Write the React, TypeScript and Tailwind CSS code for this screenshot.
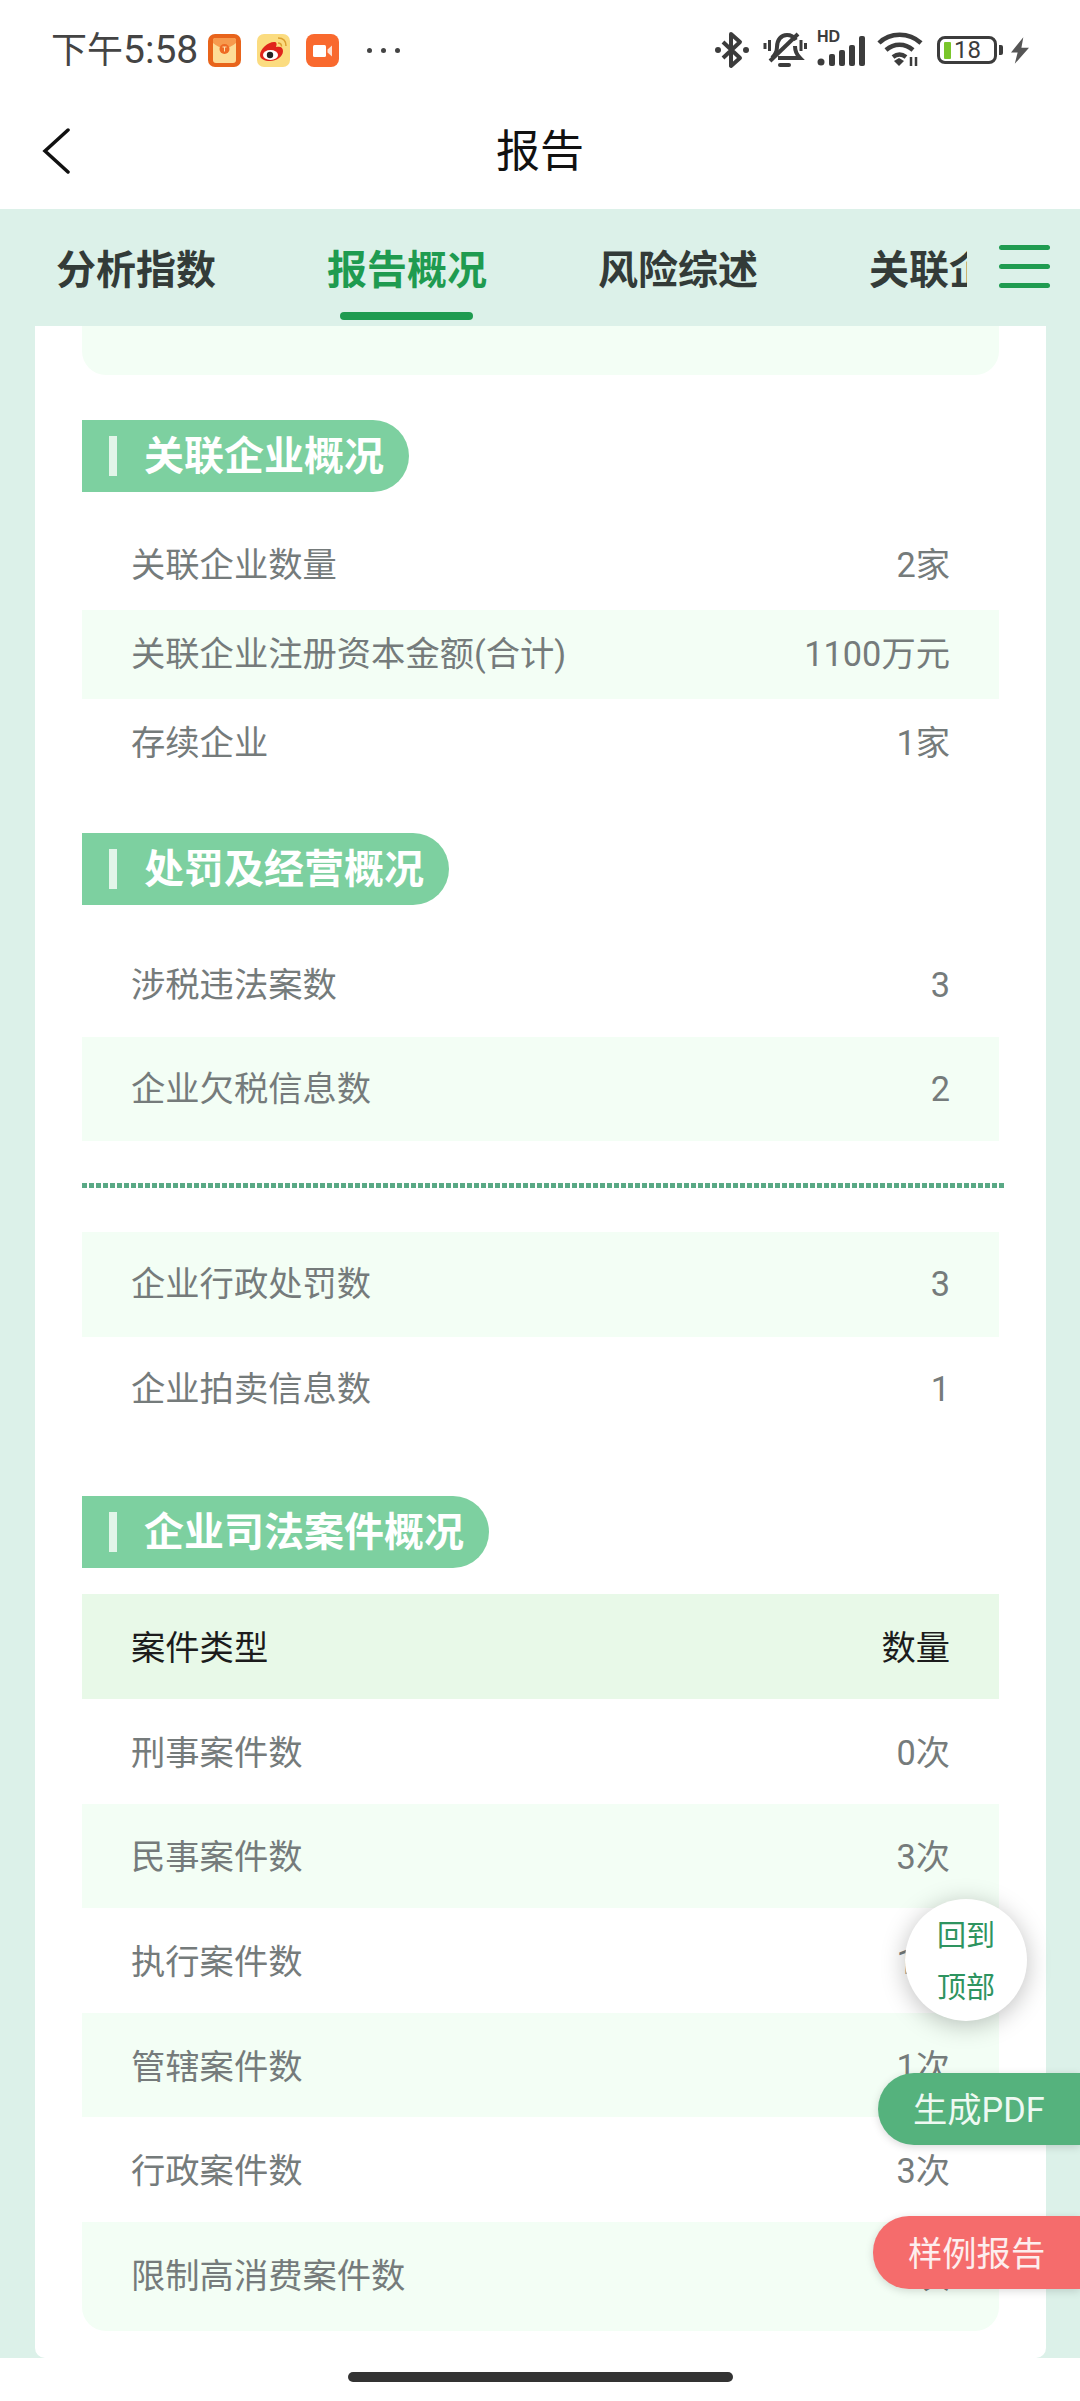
const cjk = { fontFamily: '"Roboto","Noto Sans CJK SC",sans-serif' };

function RedPacket() {
  return (
    <svg width="33" height="33" viewBox="0 0 33 33">
      <rect width="33" height="33" rx="7" fill="#e8641b" />
      <rect x="5" y="4" width="23" height="25" rx="3" fill="#fddc97" />
      <path d="M5 9 Q16.500 19 28 9 L28 6 Q28 4 26 4 L7 4 Q5 4 5 6Z" fill="#f79a4d" />
      <circle cx="16.500" cy="15" r="5" fill="#ee6a24" />
      <path d="M14.500 13h4M16.500 13v4.500" stroke="#fde3ae" strokeWidth="1" />
    </svg>
  );
}

function Weibo() {
  return (
    <svg width="33" height="33" viewBox="0 0 33 33">
      <rect width="33" height="33" rx="7" fill="#fbdc80" />
      <path d="M3 21c0-6 8-13 14-13 3 0 3 2 2 5 4-1 7 0 7 4 0 6-7 10-13 10-5 0-10-2-10-6z" fill="#e0241c" />
      <ellipse cx="13.500" cy="21" rx="7.500" ry="5" fill="#fff" />
      <circle cx="13" cy="21" r="3.200" fill="#222" />
      <path d="M21 4c5 0 8 3 8 8M21 9c2.200 0 3.500 1.500 3.500 3.500" stroke="#dca030" strokeWidth="1.500" fill="none" />
    </svg>
  );
}

function Video() {
  return (
    <svg width="33" height="33" viewBox="0 0 33 33">
      <rect width="33" height="33" rx="8" fill="#f9692e" />
      <rect x="7" y="11" width="13" height="12" rx="1.500" fill="#fff" />
      <path d="M21.500 15.500 26 11.500V22.500L21.500 18.500Z" fill="#fde0d2" />
    </svg>
  );
}

function StatusRight() {
  return (
    <div className="flex items-center">
      <svg width="34" height="38" viewBox="0 0 34 38" fill="none" stroke="#3c3c3c" strokeWidth="4">
        <path d="M8 11 25 27 16 35V3L25 11 8 27" strokeLinejoin="round" />
        <circle cx="3" cy="19" r="3" fill="#3c3c3c" stroke="none" />
        <circle cx="31" cy="19" r="3" fill="#3c3c3c" stroke="none" />
      </svg>
      <svg className="ml-[14px]" width="44" height="38" viewBox="0 0 44 38" fill="none" stroke="#3c3c3c" strokeWidth="4">
        <path d="M9 27c3-3 5-6 5-11 0-7 4-12 10-12 4 0 7 2 9 5" />
        <path d="M15 27H37c-3-3-5-6-5-12" />
        <path d="M7 30 35 3" />
        <path d="M17 34h9" strokeLinecap="round" />
        <path d="M2 12v6M6.500 9v11M38 9v11M42.500 12v6" strokeWidth="3" />
      </svg>
      <div className="relative ml-[10px] w-[48px] h-[38px]">
        <span className="absolute left-0 top-[-2px] text-[16px] leading-[16px] font-bold text-[#3c3c3c]" style={{ fontFamily: '"Liberation Sans",sans-serif' }}>HD</span>
        <svg className="absolute left-0 top-0" width="48" height="38" viewBox="0 0 48 38" fill="#3c3c3c">
          <circle cx="4" cy="31" r="3.500" />
          <rect x="12" y="23" width="6" height="12" rx="2" />
          <rect x="22" y="19" width="6" height="16" rx="2" />
          <rect x="32" y="14" width="6" height="21" rx="2" />
          <rect x="42" y="5" width="6" height="30" rx="2" />
        </svg>
      </div>
      <svg className="ml-[12px]" width="46" height="36" viewBox="0 0 46 36" fill="none" stroke="#3c3c3c" strokeWidth="4.500">
        <path d="M2 11C13 0 32 0 44 11" />
        <path d="M9 18c8-7 19-7 27 0" />
        <path d="M16 25c4-3 9-3 13 0" />
        <path d="M17 29l5 5 5-5-5-3z" fill="#3c3c3c" stroke="none" />
        <path d="M34 25v9M39 25v9" strokeWidth="2.500" />
      </svg>
      <div className="relative ml-[14px] w-[60px] h-[28px] rounded-[8px] border-[3px] border-[#3c3c3c] flex items-center">
        <div className="ml-[4px] w-[7px] h-[17px] rounded-[1px] bg-[#7ac62b]" />
        <span className="ml-[3px] text-[24px] leading-[22px] text-[#3c3c3c]" style={{ fontFamily: '"Roboto",sans-serif' }}>18</span>
      </div>
      <div className="ml-[2px] w-[4px] h-[10px] rounded-r-[2px] bg-[#3c3c3c]" />
      <svg className="ml-[8px]" width="18" height="27" viewBox="0 0 19 28" fill="#555">
        <path d="M13 0 0 16h7L4 28 19 11h-8z" />
      </svg>
    </div>
  );
}

function Heading({ children, w }: { children: React.ReactNode; w: string }) {
  return (
    <div className={`flex items-center h-[72px] rounded-r-[36px] bg-[#7dd0a0] ${w}`}>
      <div className="ml-[27px] w-[8px] h-[40px] bg-[#e2f5e9]" />
      <span className="ml-[27px] pt-[2px] text-[40px] leading-[70px] font-bold text-white" style={cjk}>{children}</span>
    </div>
  );
}

function Row({ l, r, hi, h = 'h-[104.500px]', t = 'pt-[1px]', last }: { l: string; r: string; hi?: boolean; h?: string; t?: string; last?: boolean }) {
  return (
    <div className={`flex items-center justify-between pl-[49px] pr-[49px] text-[34.300px] text-[#757b7b] ${h} ${t} ${hi ? 'bg-[#f3fef5]' : ''} ${last ? 'rounded-b-[24px]' : ''}`} style={cjk}>
      <span>{l}</span>
      <span>{r}</span>
    </div>
  );
}

export default function App() {
  return (
    <div className="relative w-[1080px] h-[2401px] overflow-hidden bg-white flex flex-col" style={cjk}>
      <div className="h-[100px] shrink-0 flex items-center justify-between pl-[51px] pr-[51px]">
        <div className="flex items-center">
          <span className="text-[36px] leading-[40px] text-[#444]">下午<span className="text-[39px]">5:58</span></span>
          <div className="ml-[10px]"><RedPacket /></div>
          <div className="ml-[16px]"><Weibo /></div>
          <div className="ml-[16px]"><Video /></div>
          <div className="ml-[28px] flex gap-[9px]">
            <div className="w-[5px] h-[5px] rounded-full bg-[#444]" />
            <div className="w-[5px] h-[5px] rounded-full bg-[#444]" />
            <div className="w-[5px] h-[5px] rounded-full bg-[#444]" />
          </div>
        </div>
        <StatusRight />
      </div>

      <div className="relative h-[109px] shrink-0 flex items-center justify-center">
        <svg className="absolute left-[42px] top-[28px]" width="30" height="46" viewBox="0 0 30 46" fill="none" stroke="#111" strokeWidth="3.500" strokeLinecap="round">
          <path d="M26 2 3 23 26 44" />
        </svg>
        <span className="text-[44px] leading-[50px] text-[#111] mt-[-6px]">报告</span>
      </div>

      <div className="relative h-[117px] shrink-0 bg-[#dcf1e9] overflow-hidden">
        <div className="flex gap-[111px] pl-[56px] w-[967px] overflow-hidden pt-[37px] h-[117px]">
          <span className="shrink-0 text-[40px] leading-[50px] font-bold text-[#333b38]">分析指数</span>
          <div className="shrink-0 relative">
            <span className="text-[40px] leading-[50px] font-bold text-[#1f9b50]">报告概况</span>
            <div className="absolute left-[13px] top-[66px] w-[133px] h-[8px] rounded-full bg-[#1f9b50]" />
          </div>
          <span className="shrink-0 text-[40px] leading-[50px] font-bold text-[#333b38]">风险综述</span>
          <span className="shrink-0 text-[40px] leading-[50px] font-bold text-[#333b38]">关联企业</span>
        </div>
        <div className="absolute left-[999px] top-[36px] w-[51px] flex flex-col gap-[14px]">
          <div className="h-[5px] rounded-full bg-[#1f9b50]" />
          <div className="h-[5px] rounded-full bg-[#1f9b50]" />
          <div className="h-[5px] rounded-full bg-[#1f9b50]" />
        </div>
      </div>

      <div className="h-[2032px] shrink-0 bg-[#dcf1e9] pl-[35px] pr-[34px]">
        <div className="h-full bg-white rounded-b-[10px] px-[47px] overflow-hidden">
          <div className="h-[49px] rounded-b-[24px] bg-[#f3fef5]" />

          <div className="mt-[45px]"><Heading w="w-[327px]">关联企业概况</Heading></div>
          <div className="mt-[29px]">
            <Row h="h-[89px]" t="" l="关联企业数量" r="2家" />
            <Row h="h-[89px]" t="" hi l="关联企业注册资本金额(合计)" r="1100万元" />
            <Row h="h-[89px]" t="" l="存续企业" r="1家" />
          </div>

          <div className="mt-[45px]"><Heading w="w-[367px]">处罚及经营概况</Heading></div>
          <div className="mt-[28px]">
            <Row h="h-[104px]" l="涉税违法案数" r="3" />
            <Row h="h-[104px]" hi l="企业欠税信息数" r="2" />
          </div>

          <div className="mt-[42px] mr-[-5px] h-[5px] bg-[repeating-linear-gradient(90deg,#59a985_0_5px,#ffffff_5px_7px)]" />

          <div className="mt-[44px]">
            <Row hi l="企业行政处罚数" r="3" />
            <Row l="企业拍卖信息数" r="1" />
          </div>

          <div className="mt-[55px]"><Heading w="w-[407px]">企业司法案件概况</Heading></div>
          <div className="mt-[26px]">
            <div className="flex items-center justify-between pl-[49px] pr-[49px] pt-[4px] h-[105px] bg-[#e8f9e8] text-[34.300px] text-[#1c1c1c]">
              <span>案件类型</span>
              <span>数量</span>
            </div>
            <Row t="pt-[4px]" l="刑事案件数" r="0次" />
            <Row t="pt-[4px]" hi l="民事案件数" r="3次" />
            <Row t="pt-[4px]" l="执行案件数" r="1次" />
            <Row t="pt-[5px]" hi l="管辖案件数" r="1次" />
            <Row t="pt-[5px]" l="行政案件数" r="3次" />
            <Row h="h-[109px]" t="pt-[1px]" hi last l="限制高消费案件数" r="1次" />
          </div>
        </div>
      </div>

      <div className="flex-1 flex justify-center pt-[14px]">
        <div className="w-[385px] h-[10px] rounded-full bg-[#333]" />
      </div>

      <div className="absolute left-[905px] top-[1899px] w-[122px] h-[122px] pt-[3px] rounded-full bg-white shadow-[0_4px_24px_rgba(0,0,0,0.25)] flex flex-col items-center justify-center text-[29px] leading-[52px] text-[#2e9460]">
        <span>回到</span>
        <span>顶部</span>
      </div>
      <div className="absolute left-[878px] top-[2073px] w-[202px] h-[72px] pt-[4px] rounded-l-[36px] bg-[#55b27d] shadow-[0_2px_8px_rgba(0,0,0,0.15)] flex items-center pl-[35px] text-[34.300px] text-[#eef9f2]">
        生成PDF
      </div>
      <div className="absolute left-[873px] top-[2216px] w-[207px] h-[73px] pt-[4px] rounded-l-[36px] bg-[#f56c6c] shadow-[0_2px_8px_rgba(0,0,0,0.15)] flex items-center pl-[35px] text-[34.300px] text-[#fdeeee]">
        样例报告
      </div>
    </div>
  );
}
